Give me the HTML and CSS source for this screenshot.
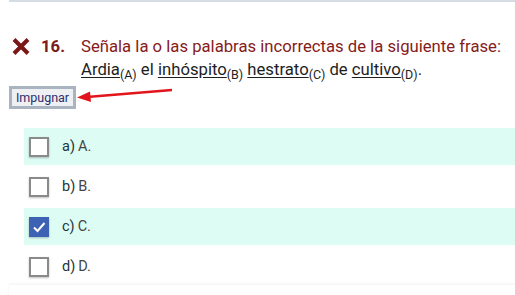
FILE: index.html
```html
<!DOCTYPE html>
<html lang="es">
<head>
    <meta charset="UTF-8">
    <meta name="viewport" content="width=device-width, initial-scale=1.0">
    <title>Pregunta 16</title>
    <link rel="stylesheet" href="styles.css">
</head>
<body>
    <div class="page">
        <div class="question">
            <div class="question-head">
                <svg class="wrong-icon" width="18" height="17" viewBox="0 0 18 17">
                    <path d="M2 1.5 L16 15.5 M16 1.5 L2 15.5" stroke="#7a1717" stroke-width="4" stroke-linecap="butt"/>
                </svg>
                <span class="q-number">16.</span>
                <div class="q-text">
                    <span class="q-title">Señala la o las palabras incorrectas de la siguiente frase:</span>
                    <span class="q-phrase"><u>Ardia</u><sub>(A)</sub> el <u>inhóspito</u><sub>(B)</sub> <u>hestrato</u><sub>(C)</sub> de <u>cultivo</u><sub>(D)</sub>.</span>
                </div>
            </div>

            <div class="claim-row">
                <button class="claim-btn">Impugnar</button>
                <svg class="arrow" width="98" height="15" viewBox="0 0 98 15">
                    <line x1="96" y1="2" x2="11" y2="9" stroke="#e3141c" stroke-width="2.6"/>
                    <polygon points="1,9.5 14,3.5 15,14" fill="#e3141c"/>
                </svg>
            </div>

            <ul class="options">
                <li class="option marked">
                    <span class="checkbox"></span>
                    <span class="opt-letter">a)</span> <span class="opt-text">A.</span>
                </li>
                <li class="option">
                    <span class="checkbox"></span>
                    <span class="opt-letter">b)</span> <span class="opt-text">B.</span>
                </li>
                <li class="option marked">
                    <span class="checkbox checked">
                        <svg width="14" height="12" viewBox="0 0 14 12">
                            <path d="M2 6.5 L5.5 10 L12.5 2" stroke="#fff" stroke-width="2" fill="none"/>
                        </svg>
                    </span>
                    <span class="opt-letter">c)</span> <span class="opt-text">C.</span>
                </li>
                <li class="option">
                    <span class="checkbox"></span>
                    <span class="opt-letter">d)</span> <span class="opt-text">D.</span>
                </li>
            </ul>
        </div>
        <div class="next-card"></div>
    </div>
</body>
</html>
```

FILE: styles.css
```css
body {
    margin: 0;
    font-family: Roboto, 'Liberation Sans', sans-serif;
    background-color: #fff;
    overflow: hidden;
}

.page {
    padding-left: 9px;
}

.question {
    border-top: 2px solid #d6dce3;
    padding-top: 33px;
}

.question-head {
    display: flex;
    align-items: flex-start;
    font-size: 16.7px;
    line-height: 23px;
}

.wrong-icon {
    margin: 3px 0 0 3px;
    flex-shrink: 0;
}

.q-number {
    font-weight: bold;
    color: #7a1c1c;
    margin-left: 11px;
    width: 40px;
    flex-shrink: 0;
}

.q-text {
    display: flex;
    flex-direction: column;
}

.q-title {
    color: #861b1b;
}

.q-phrase {
    color: #1e1e1e;
}

.q-phrase u {
    text-underline-offset: 2px;
}

.q-phrase sub {
    font-size: 12.5px;
    vertical-align: -4px;
    line-height: 0;
}

.claim-row {
    position: relative;
    margin-top: 5px;
    height: 23px;
}

.claim-btn {
    font-family: Roboto, 'Liberation Sans', sans-serif;
    font-size: 12.5px;
    color: #2c2f6f;
    background-color: #eef0f4;
    border: 3px solid #a9b4c0;
    padding: 0 3px;
    height: 23px;
    width: 67px;
    line-height: 17px;
}

.arrow {
    position: absolute;
    left: 67px;
    top: 2px;
}

.options {
    list-style: none;
    margin: 19px 0 0 15px;
    padding: 0;
}

.option {
    display: flex;
    align-items: center;
    height: 37px;
    margin-bottom: 3px;
    padding-left: 5px;
    font-size: 14.5px;
    color: #333;
}

.option:last-child {
    margin-bottom: 0;
}

.option.marked {
    background-color: #dcfcf4;
}

.checkbox {
    width: 16px;
    height: 16px;
    border: 2px solid #8a8a8a;
    background-color: #fff;
    box-shadow: 0 1px 2px rgba(0, 0, 0, 0.25);
    margin-right: 13px;
    display: flex;
    align-items: center;
    justify-content: center;
}

.checkbox.checked {
    background-color: #3e62b3;
    border-color: #3e62b3;
}

.opt-letter {
    color: #1c3540;
    margin-right: 3px;
}

.opt-text {
    color: #454545;
}

.next-card {
    height: 20px;
    box-shadow: 0 -1px 3px rgba(0, 0, 0, 0.06);
}
```
